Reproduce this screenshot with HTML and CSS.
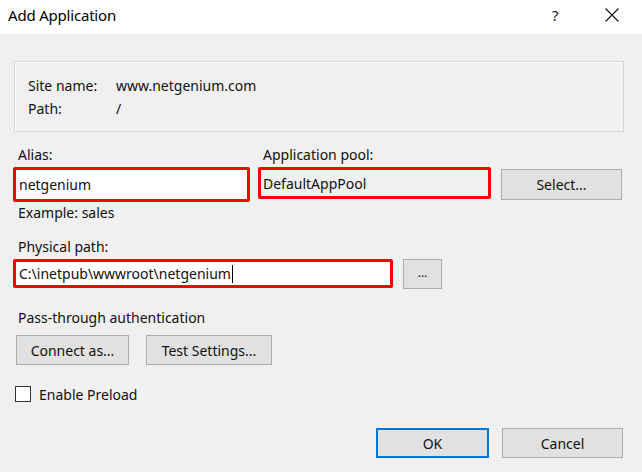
FILE: index.html
```html
<!DOCTYPE html>
<html>
<head>
<meta charset="utf-8">
<link rel="stylesheet" href="styles.css">
</head>
<body>
<div class="dialog">
  <div class="titlebar">
    <span class="title">Add Application</span>
    <span class="tb-help">?</span>
    <span class="tb-close">
      <svg width="16" height="16" viewBox="0 0 16 16"><path d="M1.5 1.5 L14.5 14.5 M14.5 1.5 L1.5 14.5" stroke="#111" stroke-width="1.1" fill="none"/></svg>
    </span>
  </div>
  <div class="content">
    <div class="infobox">
      <div class="info-row"><span class="info-key">Site name:</span><span>www.netgenium.com</span></div>
      <div class="info-row"><span class="info-key">Path:</span><span>/</span></div>
    </div>

    <div class="fields">
      <div class="col col-alias">
        <div class="label">Alias:</div>
        <div class="input input-alias">netgenium</div>
        <div class="hint">Example: sales</div>
      </div>
      <div class="col col-pool">
        <div class="label">Application pool:</div>
        <div class="input input-pool">DefaultAppPool</div>
      </div>
      <div class="col col-select">
        <div class="btn btn-select">Select...</div>
      </div>
    </div>

    <div class="label label-path">Physical path:</div>
    <div class="path-row">
      <div class="input input-path">C:\inetpub\wwwroot\netgenium<span class="caret"></span></div>
      <div class="btn btn-browse">...</div>
    </div>

    <div class="label label-pass">Pass-through authentication</div>
    <div class="auth-row">
      <div class="btn btn-connect">Connect as...</div>
      <div class="btn btn-test">Test Settings...</div>
    </div>

    <div class="check-row">
      <span class="checkbox"></span>
      <span>Enable Preload</span>
    </div>

    <div class="footer">
      <div class="btn btn-ok">OK</div>
      <div class="btn btn-cancel">Cancel</div>
    </div>
  </div>
</div>
</body>
</html>
```

FILE: styles.css
```css
* { box-sizing: border-box; }
html, body { margin: 0; padding: 0; }
body {
  width: 642px;
  height: 472px;
  background: #f0f0f0;
  font-family: "Noto Sans", "Open Sans", Arial, sans-serif;
  font-size: 14px;
  color: #111;
  overflow: hidden;
}
.dialog { width: 642px; height: 472px; display: flex; flex-direction: column; }

.titlebar {
  height: 34px;
  background: #fff;
  display: flex;
  align-items: center;
  padding-left: 8px;
}
.title { font-size: 15px; flex: 1; color: #000; margin-top: -4px; letter-spacing: -0.2px; }
.tb-help { font-size: 15px; width: 20px; margin-right: 32px; color: #111; margin-top: -4px; }
.tb-close { width: 16px; height: 16px; margin-right: 22px; margin-top: -4px; display: flex; }

.content { padding: 27px 0 0 13px; display: flex; flex-direction: column; }

.infobox {
  margin-left: 1px;
  width: 610px;
  height: 71px;
  border: 1px solid #d6d6d6;
  box-shadow: inset 1px 1px 0 #ffffff;
  padding: 12px 0 0 13px;
}
.info-row { display: flex; height: 23px; line-height: 23px; }
.info-key { width: 88px; }

.fields { display: flex; margin-top: 13px; }
.label { line-height: 20px; height: 20px; padding-left: 5px; }
.col-alias { width: 237px; }
.col-pool { width: 233px; margin-left: 8px; }
.col-select { margin-left: 10px; padding-top: 24px; }

.input {
  border: 3px solid #ff0000;
  border-radius: 2px;
  background: #fff;
  padding-left: 3px;
  display: flex;
  align-items: center;
}
.input-alias { height: 35px; margin-top: 2px; }
.input-pool { height: 32px; margin-top: 2px; background: #f0f0f0; padding-left: 2px; }
.hint { line-height: 20px; padding-left: 5px; margin-top: 1px; }

.btn {
  background: #e1e1e1;
  border: 1px solid #adadad;
  display: flex;
  align-items: center;
  justify-content: center;
  height: 30px;
}
.btn-select { width: 121px; height: 31px; }

.label-path { margin-top: 14px; }
.path-row { display: flex; margin-top: 2px; }
.input-path { width: 380px; height: 29px; padding-left: 3px; }
.caret { display: inline-block; width: 1px; height: 18px; background: #000; margin-left: 1px; }
.btn-browse { width: 39px; margin-left: 10px; font-size: 12px; padding-bottom: 4px; }

.label-pass { margin-top: 19px; }
.auth-row { display: flex; margin-top: 7px; margin-left: 3px; }
.btn-connect { width: 113px; }
.btn-test { width: 126px; margin-left: 17px; }

.check-row { display: flex; align-items: center; margin-top: 21px; margin-left: 2px; height: 16px; }
.checkbox { width: 16px; height: 16px; border: 1px solid #333; background: #fff; margin-right: 8px; }

.footer { display: flex; justify-content: flex-end; margin-top: 26px; padding-right: 19px; }
.btn-ok { width: 113px; border: 2px solid #0078d7; }
.btn-cancel { width: 121px; margin-left: 13px; }
```
